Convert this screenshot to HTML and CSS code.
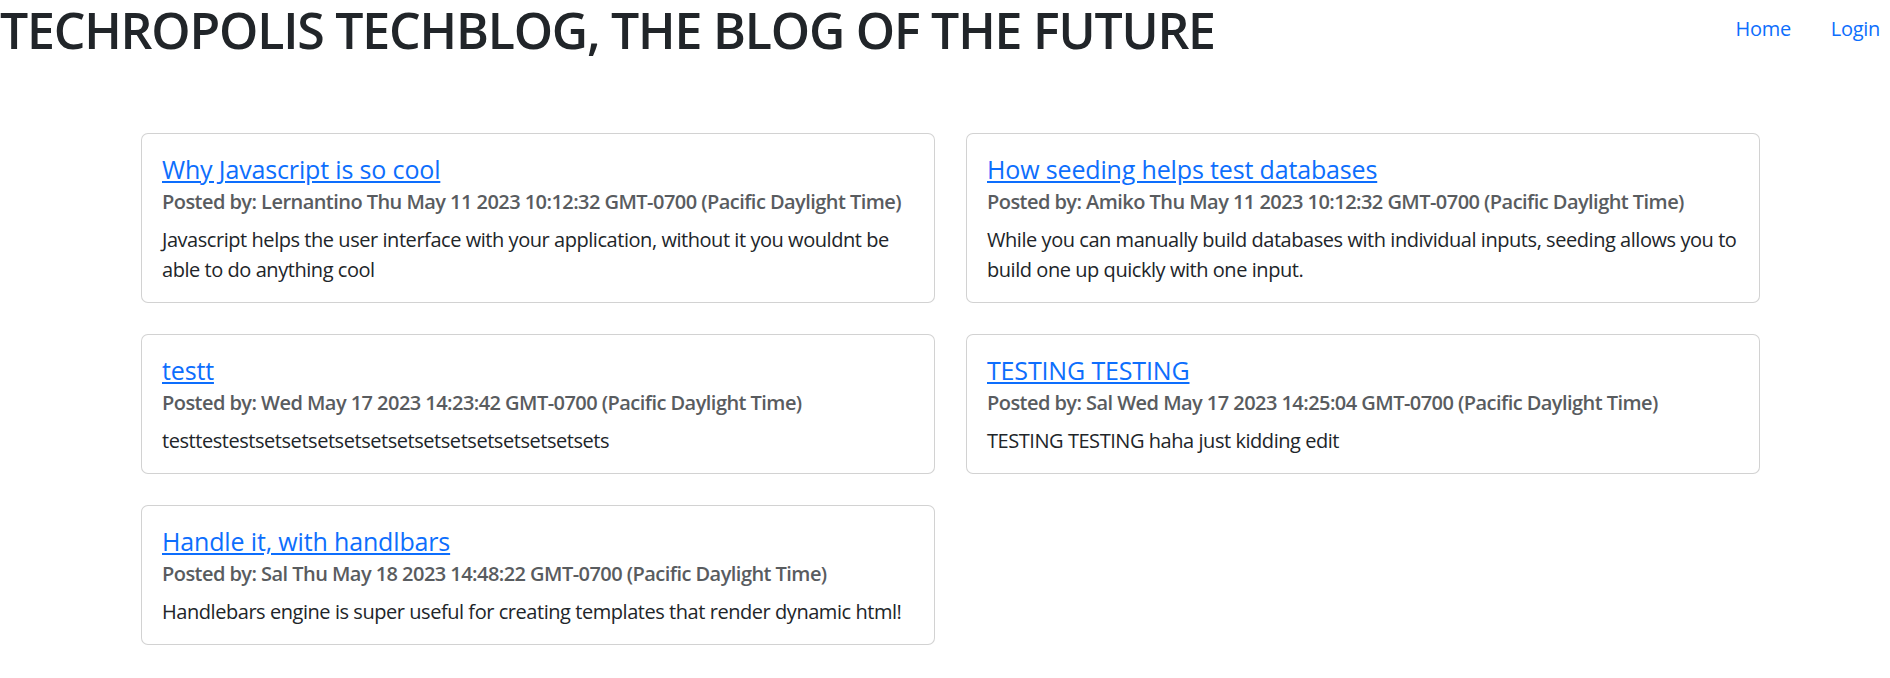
FILE: index.html
```html
<!DOCTYPE html>
<html lang="en">
<head>
<meta charset="utf-8">
<title>Techropolis Techblog</title>
<link rel="stylesheet" href="styles.css">
</head>
<body>
<header class="site-header">
  <h1 class="site-title">TECHROPOLIS TECHBLOG, THE BLOG OF THE FUTURE</h1>
  <nav class="site-nav">
    <a class="nav-link" href="#">Home</a>
    <a class="nav-link" href="#">Login</a>
  </nav>
</header>
<main class="posts">
  <article class="card">
    <h5 class="card-title"><a href="#">Why Javascript is so cool</a></h5>
    <h6 class="card-meta">Posted by: Lernantino Thu May 11 2023 10:12:32 GMT-0700 (Pacific Daylight Time)</h6>
    <p class="card-text">Javascript helps the user interface with your application, without it you wouldnt be able to do anything cool</p>
  </article>
  <article class="card">
    <h5 class="card-title"><a href="#">How seeding helps test databases</a></h5>
    <h6 class="card-meta">Posted by: Amiko Thu May 11 2023 10:12:32 GMT-0700 (Pacific Daylight Time)</h6>
    <p class="card-text">While you can manually build databases with individual inputs, seeding allows you to build one up quickly with one input.</p>
  </article>
  <article class="card">
    <h5 class="card-title"><a href="#">testt</a></h5>
    <h6 class="card-meta">Posted by: Wed May 17 2023 14:23:42 GMT-0700 (Pacific Daylight Time)</h6>
    <p class="card-text">testtestestsetsetsetsetsetsetsetsetsetsetsetsetsets</p>
  </article>
  <article class="card">
    <h5 class="card-title"><a href="#">TESTING TESTING</a></h5>
    <h6 class="card-meta">Posted by: Sal Wed May 17 2023 14:25:04 GMT-0700 (Pacific Daylight Time)</h6>
    <p class="card-text">TESTING TESTING haha just kidding edit</p>
  </article>
  <article class="card">
    <h5 class="card-title"><a href="#">Handle it, with handlbars</a></h5>
    <h6 class="card-meta">Posted by: Sal Thu May 18 2023 14:48:22 GMT-0700 (Pacific Daylight Time)</h6>
    <p class="card-text">Handlebars engine is super useful for creating templates that render dynamic html!</p>
  </article>
</main>
</body>
</html>
```

FILE: styles.css
```css
html, body {
  margin: 0;
  padding: 0;
  background: #fff;
}
body {
  font-family: "Open Sans", "Noto Sans", "Liberation Sans", sans-serif;
  font-size: 20px;
  line-height: 1.5;
  color: #212529;
}
.site-header {
  display: flex;
  justify-content: space-between;
  align-items: flex-start;
}
.site-title {
  margin: 0;
  font-size: 50px;
  font-weight: 600;
  letter-spacing: -1.2px;
  line-height: 1.2;
  color: #212529;
  white-space: nowrap;
}
.site-nav {
  display: flex;
  padding-top: 14px;
  padding-right: 10px;
}
.nav-link {
  display: block;
  padding: 0 20px;
  color: #0d6efd;
  text-decoration: none;
  font-size: 20px;
  line-height: 1.5;
  letter-spacing: -0.3px;
}
.nav-link:last-child {
  padding-right: 0;
}
.posts {
  display: grid;
  grid-template-columns: 794px 794px;
  column-gap: 31px;
  row-gap: 31px;
  align-items: start;
  padding: 73px 130px 30px 141px;
}
.card {
  border: 1px solid rgba(0, 0, 0, 0.175);
  border-radius: 7px;
  padding: 20px 20px 17px;
  background: #fff;
}
.card-title {
  margin: 0 0 6px;
  font-size: 25px;
  font-weight: 500;
  line-height: 1.2;
  letter-spacing: -0.15px;
}
.card-title a {
  color: #0d6efd;
  text-decoration: underline;
}
.card-meta {
  margin: 0 0 11px;
  font-size: 20px;
  font-weight: 600;
  line-height: 1.2;
  letter-spacing: -0.55px;
  color: #595c5f;
}
.card-text {
  margin: 0;
  font-size: 20px;
  line-height: 1.5;
  letter-spacing: -0.45px;
}
```
